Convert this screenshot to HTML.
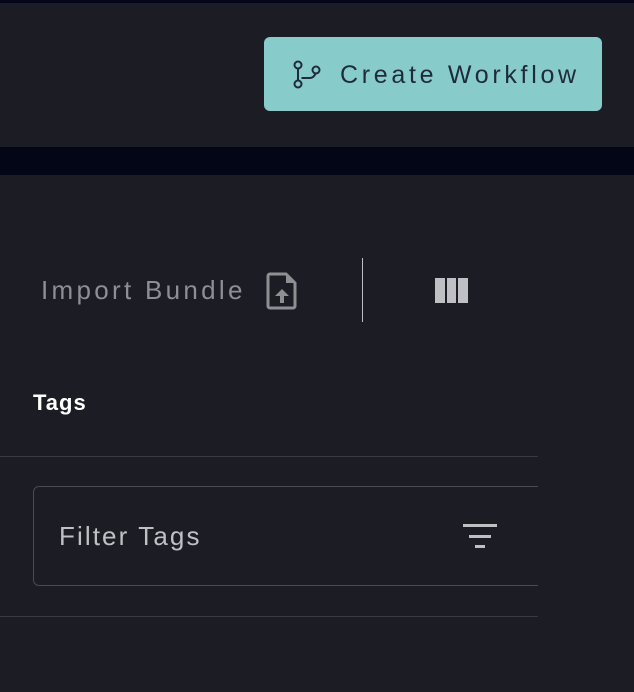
<!DOCTYPE html><html><head><style>
body{margin:0;width:634px;height:692px;background:#1c1c24;font-family:"Liberation Sans",sans-serif;position:relative;overflow:hidden}
div{position:absolute;box-sizing:border-box}
</style></head><body>
<div style="left:0;top:0;width:634px;height:3px;background:#04071a"></div>
<div style="left:0;top:147px;width:634px;height:28px;background:#030617"></div>
<div style="left:264px;top:37px;width:338px;height:74px;background:#87cccb;border-radius:6px"></div>
<svg style="position:absolute;left:292px;top:60px" width="32" height="30" viewBox="0 0 32 30" fill="none" stroke="#1f2a3a" stroke-width="2"><circle cx="6" cy="5" r="3.5"/><circle cx="6" cy="24" r="3.5"/><circle cx="24" cy="10" r="3.5"/><path d="M6 8.5V20.5M9.5 18h8a6 6 0 0 0 6-5"/></svg>
<div style="left:340px;top:60px;font-size:25px;color:#1f2a3a;letter-spacing:3.7px;line-height:30px;white-space:nowrap">Create Workflow</div>
<div style="left:41px;top:274px;font-size:26px;color:#8e8e93;letter-spacing:3.3px;line-height:32px;white-space:nowrap">Import Bundle</div>
<svg style="position:absolute;left:266px;top:272px" width="32" height="38" viewBox="0 0 32 38"><path d="M4 2h16l9 9v23a2 2 0 0 1-2 2H4a2 2 0 0 1-2-2V4a2 2 0 0 1 2-2z" fill="none" stroke="#8e8e93" stroke-width="3"/><path d="M20 2v9h9z" fill="#8e8e93"/><path d="M16 17l-7 7h5v7h4v-7h5z" fill="#8e8e93"/></svg>
<div style="left:362px;top:258px;width:1px;height:64px;background:#c0c0c4"></div>
<div style="left:435px;top:278px;width:10px;height:25px;background:#c0c0c4"></div>
<div style="left:447px;top:278px;width:9px;height:25px;background:#c0c0c4"></div>
<div style="left:458px;top:278px;width:10px;height:25px;background:#c0c0c4"></div>
<div style="left:33px;top:389px;font-size:22px;font-weight:bold;color:#fff;line-height:28px;letter-spacing:1px">Tags</div>
<div style="left:0;top:456px;width:538px;height:1px;background:#3a3a42"></div>
<div style="left:33px;top:486px;width:520px;height:100px;border:1px solid #4a4a52;border-radius:6px"></div>
<div style="left:538px;top:480px;width:96px;height:112px;background:#1c1c24"></div>
<div style="left:59px;top:520px;font-size:26px;color:#c0c0c4;letter-spacing:2.1px;line-height:32px;white-space:nowrap">Filter Tags</div>
<div style="left:463px;top:524px;width:34px;height:3px;background:#c0c0c4"></div>
<div style="left:469px;top:535px;width:22px;height:3px;background:#c0c0c4"></div>
<div style="left:475px;top:545px;width:10px;height:3px;background:#c0c0c4"></div>
<div style="left:0;top:616px;width:538px;height:1px;background:#3a3a42"></div>
</body></html>
